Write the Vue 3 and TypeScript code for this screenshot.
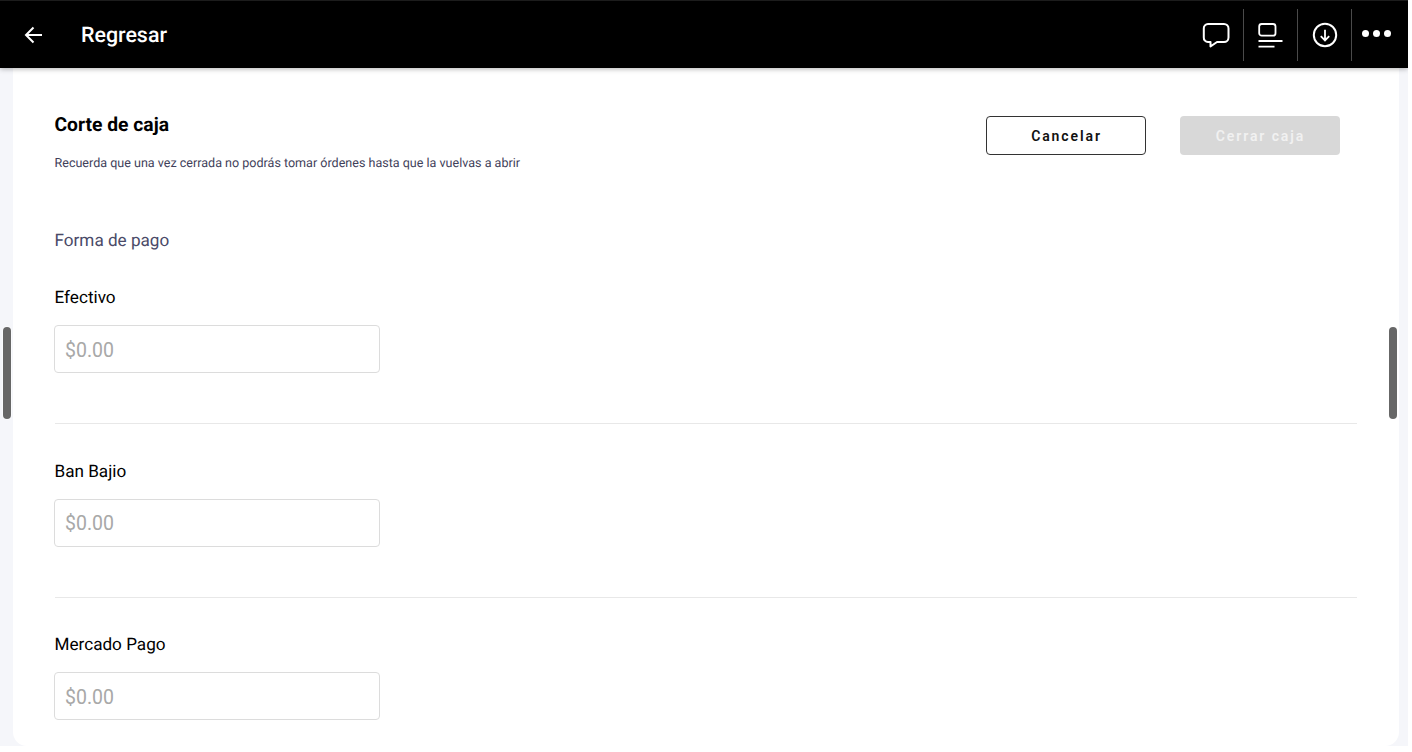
<script setup lang="ts">
const fields: string[] = ['Efectivo', 'Ban Bajio', 'Mercado Pago']
</script>

<template>
  <div class="page">
    <header class="topbar">
      <div class="back">
        <svg class="arrow" width="20" height="20" viewBox="0 0 20 20" fill="none" stroke="#fff" stroke-width="2">
          <path d="M19 10H3.500M10.500 2.500 3 10l7.500 7.500" />
        </svg>
        <span class="back-label">Regresar</span>
      </div>
      <div class="actions">
        <div class="action action-first">
          <svg width="28" height="28" viewBox="0 0 28 28" fill="none" stroke="#fff" stroke-width="2" stroke-linejoin="round">
            <path d="M6 3h16a4.500 4.500 0 0 1 4.500 4.500v9A4.500 4.500 0 0 1 22 21h-7l-6.500 4.500V21H6a4.200 4.200 0 0 1-4.200-4.500v-9A4.200 4.200 0 0 1 6 3Z" />
          </svg>
        </div>
        <div class="action">
          <svg width="26" height="28" viewBox="0 0 26 28" fill="none" stroke="#fff" stroke-width="1.800">
            <rect x="1.200" y="3" width="16.300" height="11.700" rx="2.500" />
            <path d="M0.500 20h24M0.500 25.700h16" />
          </svg>
        </div>
        <div class="action">
          <svg width="28" height="28" viewBox="0 0 28 28" fill="none" stroke="#fff" stroke-width="2">
            <circle cx="14" cy="14" r="11.200" />
            <path d="M14 8.700v10.500M9.800 15.200l4.200 4.200 4.200-4.200" stroke-width="1.800" />
          </svg>
        </div>
        <div class="action action-last">
          <span class="dot"></span><span class="dot"></span><span class="dot"></span>
        </div>
      </div>
    </header>

    <main class="card">
      <section class="title-row">
        <div class="title-text">
          <h1 class="title">Corte de caja</h1>
          <p class="subtitle">Recuerda que una vez cerrada no podrás tomar órdenes hasta que la vuelvas a abrir</p>
        </div>
        <div class="buttons">
          <button class="btn btn-outline" type="button">Cancelar</button>
          <button class="btn btn-disabled" type="button" disabled>Cerrar caja</button>
        </div>
      </section>

      <h2 class="section-label">Forma de pago</h2>

      <div v-for="(field, index) in fields" :key="field" class="field" :class="{ 'field-last': index === fields.length - 1 }">
        <label class="field-label">{{ field }}</label>
        <input class="field-input" type="text" placeholder="$0.00" />
      </div>
    </main>

    <div class="scroll-thumb scroll-left"></div>
    <div class="scroll-thumb scroll-right"></div>
  </div>
</template>

<style scoped>
.page {
  position: relative;
  width: 1408px;
  height: 746px;
  overflow: hidden;
  background: #f5f6fa;
  font-family: Roboto, "Liberation Sans", sans-serif;
  text-rendering: geometricPrecision;
}

.topbar {
  position: relative;
  z-index: 2;
  box-sizing: border-box;
  height: 68px;
  display: flex;
  align-items: center;
  justify-content: space-between;
  background: #000;
  box-shadow: inset 0 1px 0 #1c1c1c, 0 1px 5px rgba(0, 0, 0, 0.3);
}

.back {
  display: flex;
  align-items: center;
  margin-top: 1px;
  padding-left: 23px;
}

.back-label {
  margin-left: 38px;
  padding-top: 2px;
  color: #fff;
  font-size: 21.4px;
  font-weight: 500;
}

.arrow {
  display: block;
}

.actions {
  display: flex;
  align-items: center;
  height: 52px;
  margin-top: 2px;
  padding-right: 16px;
}

.action {
  box-sizing: border-box;
  width: 54px;
  height: 52px;
  display: flex;
  align-items: center;
  justify-content: center;
  border-right: 1px solid #4a4a4a;
}

.action-first {
  width: 56px;
}

.action-last {
  width: 40px;
  padding-right: 1.5px;
  justify-content: flex-end;
  gap: 4px;
  border-right: 0;
}

.dot {
  width: 7px;
  height: 7px;
  margin-bottom: 4px;
  border-radius: 50%;
  background: #fff;
}

.card {
  box-sizing: border-box;
  height: 678px;
  margin: 0 9px 0 13px;
  padding: 45px 42px 0 41.5px;
  overflow: hidden;
  background: #fff;
  border-radius: 0 0 14px 14px;
}

.title-row {
  display: flex;
  justify-content: space-between;
  align-items: flex-start;
  padding-right: 17.5px;
}

.title {
  margin: 0;
  color: #000;
  font-size: 19.3px;
  line-height: 23px;
  font-weight: 700;
}

.subtitle {
  margin: 20px 0 0;
  color: #3f3f5a;
  font-size: 12.55px;
  line-height: 15px;
}

.buttons {
  display: flex;
  gap: 34px;
  margin-top: 3px;
}

.btn {
  box-sizing: border-box;
  width: 160px;
  height: 39px;
  padding: 0 0 0 2px;
  border-radius: 4px;
  font-family: inherit;
  font-size: 14px;
  font-weight: 600;
  letter-spacing: 1.900px;
}

.btn-outline {
  border: 1px solid #333;
  background: #fff;
  color: #111;
}

.btn-disabled {
  border: 0;
  background: #d8d8d8;
  color: #f1f1f1;
}

.section-label {
  margin: 60px 0 0;
  color: #4a4a68;
  font-size: 17.14px;
  line-height: 20px;
  font-weight: 400;
}

.field {
  margin-top: 37px;
  padding-bottom: 50px;
  border-bottom: 1px solid #e8e8e8;
}

.field + .field {
  margin-top: 37.5px;
}

.field-last {
  border-bottom: 0;
}

.field-label {
  display: block;
  color: #000;
  font-size: 17.14px;
  line-height: 20px;
}

.field-input {
  box-sizing: border-box;
  display: block;
  width: 326px;
  height: 48px;
  margin-top: 17px;
  margin-left: -0.5px;
  padding: 2px 10px 0;
  border: 1px solid #dcdcdc;
  border-radius: 4px;
  outline: none;
  background: #fff;
  font-family: inherit;
  font-size: 19.5px;
  color: #333;
}

.field-input::placeholder {
  color: #a8a8a8;
  opacity: 1;
}

.scroll-thumb {
  position: absolute;
  top: 327px;
  width: 8px;
  height: 92px;
  border-radius: 4px;
  background: #676767;
  box-shadow: 0 0 0 1px rgba(255, 255, 255, 0.5);
}

.scroll-left {
  left: 3px;
}

.scroll-right {
  left: 1389px;
}
</style>

<style>
html,
body {
  margin: 0;
  background: #fff;
}
</style>
